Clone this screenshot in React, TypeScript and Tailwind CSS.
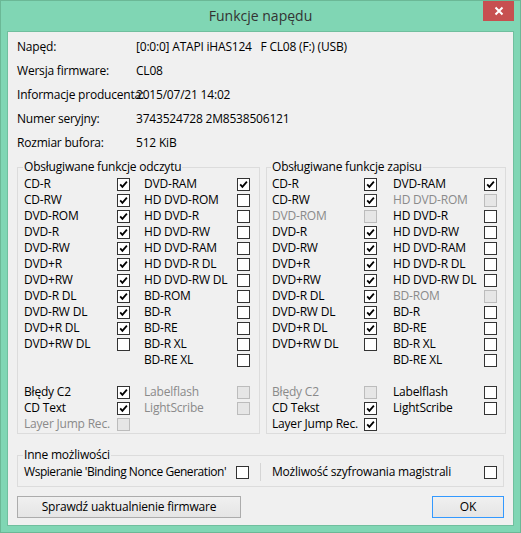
import React from 'react'

type Item = { label: string; state: 'on' | 'off' | 'dis' } | null

const readCol1: Item[] = [
  { label: 'CD-R', state: 'on' },
  { label: 'CD-RW', state: 'on' },
  { label: 'DVD-ROM', state: 'on' },
  { label: 'DVD-R', state: 'on' },
  { label: 'DVD-RW', state: 'on' },
  { label: 'DVD+R', state: 'on' },
  { label: 'DVD+RW', state: 'on' },
  { label: 'DVD-R DL', state: 'on' },
  { label: 'DVD-RW DL', state: 'on' },
  { label: 'DVD+R DL', state: 'on' },
  { label: 'DVD+RW DL', state: 'off' },
  null,
  null,
  { label: 'Błędy C2', state: 'on' },
  { label: 'CD Text', state: 'on' },
  { label: 'Layer Jump Rec.', state: 'dis' },
]

const readCol2: Item[] = [
  { label: 'DVD-RAM', state: 'on' },
  { label: 'HD DVD-ROM', state: 'off' },
  { label: 'HD DVD-R', state: 'off' },
  { label: 'HD DVD-RW', state: 'off' },
  { label: 'HD DVD-RAM', state: 'off' },
  { label: 'HD DVD-R DL', state: 'off' },
  { label: 'HD DVD-RW DL', state: 'off' },
  { label: 'BD-ROM', state: 'off' },
  { label: 'BD-R', state: 'off' },
  { label: 'BD-RE', state: 'off' },
  { label: 'BD-R XL', state: 'off' },
  { label: 'BD-RE XL', state: 'off' },
  null,
  { label: 'Labelflash', state: 'dis' },
  { label: 'LightScribe', state: 'dis' },
]

const writeCol1: Item[] = [
  { label: 'CD-R', state: 'on' },
  { label: 'CD-RW', state: 'on' },
  { label: 'DVD-ROM', state: 'dis' },
  { label: 'DVD-R', state: 'on' },
  { label: 'DVD-RW', state: 'on' },
  { label: 'DVD+R', state: 'on' },
  { label: 'DVD+RW', state: 'on' },
  { label: 'DVD-R DL', state: 'on' },
  { label: 'DVD-RW DL', state: 'on' },
  { label: 'DVD+R DL', state: 'on' },
  { label: 'DVD+RW DL', state: 'off' },
  null,
  null,
  { label: 'Błędy C2', state: 'dis' },
  { label: 'CD Tekst', state: 'on' },
  { label: 'Layer Jump Rec.', state: 'on' },
]

const writeCol2: Item[] = [
  { label: 'DVD-RAM', state: 'on' },
  { label: 'HD DVD-ROM', state: 'dis' },
  { label: 'HD DVD-R', state: 'off' },
  { label: 'HD DVD-RW', state: 'off' },
  { label: 'HD DVD-RAM', state: 'off' },
  { label: 'HD DVD-R DL', state: 'off' },
  { label: 'HD DVD-RW DL', state: 'off' },
  { label: 'BD-ROM', state: 'dis' },
  { label: 'BD-R', state: 'off' },
  { label: 'BD-RE', state: 'off' },
  { label: 'BD-R XL', state: 'off' },
  { label: 'BD-RE XL', state: 'off' },
  null,
  { label: 'Labelflash', state: 'off' },
  { label: 'LightScribe', state: 'off' },
]

const info = [
  ['Napęd:', '[0:0:0] ATAPI iHAS124   F CL08 (F:) (USB)'],
  ['Wersja firmware:', 'CL08'],
  ['Informacje producenta:', '2015/07/21 14:02'],
  ['Numer seryjny:', '3743524728 2M8538506121'],
  ['Rozmiar bufora:', '512 KiB'],
]

function Box({ checked, disabled }: { checked?: boolean; disabled?: boolean }) {
  return (
    <span
      className={
        disabled
          ? 'flex h-[13px] w-[13px] shrink-0 border border-[#bcbcbc] bg-[#e6e6e6]'
          : 'flex h-[13px] w-[13px] shrink-0 border border-[#333333] bg-white'
      }
    >
      {checked && (
        <svg width="11" height="11" viewBox="0 0 11 11">
          <path d="M2.2 5.4 L4.4 7.8 L8.9 2.6" fill="none" stroke="#000" strokeWidth="1.8" />
        </svg>
      )}
    </span>
  )
}

function Column({ items, labelW }: { items: Item[]; labelW: string }) {
  return (
    <div className="flex flex-col">
      {items.map((it, i) =>
        it ? (
          <div key={i} className="flex h-[16px] items-center">
            <span className={`${labelW} whitespace-nowrap ${it.state === 'dis' ? 'text-[#8a8a8a]' : 'text-black'}`}>
              {it.label}
            </span>
            <Box checked={it.state === 'on'} disabled={it.state === 'dis'} />
          </div>
        ) : (
          <div key={i} className="h-[16px]" />
        ),
      )}
    </div>
  )
}

export default function App() {
  return (
    <div className="flex h-[533px] w-[521px] flex-col border border-[#6bb896] bg-[#80d6b4] font-['Open_Sans',sans-serif] text-[12px] leading-[16px] tracking-[-0.2px] text-black">
      {/* title bar */}
      <div className="relative flex h-[30px] shrink-0 items-center justify-center">
        <span className="text-[14px] tracking-normal text-[#333333]">Funkcje napędu</span>
        <div className="absolute right-[6px] top-0 flex h-[20px] w-[31px] items-center justify-center bg-[#c75050]">
          <svg width="10" height="10" viewBox="0 0 10 10">
            <path d="M1.5 1.5 L8.5 8.5 M8.5 1.5 L1.5 8.5" stroke="#fff" strokeWidth="2" />
          </svg>
        </div>
      </div>

      {/* client area */}
      <div className="mx-[6px] mb-[6px] flex flex-1 flex-col border border-[#70bf9e] bg-[#f0f0f0] pl-[9px] pt-[3px]">
        {info.map(([k, v]) => (
          <div key={k} className="flex h-[24px] items-center whitespace-nowrap">
            <span className="w-[119px] shrink-0 overflow-visible">{k}</span>
            <span className="whitespace-pre">{v}</span>
          </div>
        ))}

        <div className="mt-[4px] flex gap-[6px]">
          <fieldset className="w-[243px] border border-[#dcdcdc] pb-[1px] pl-[6px] pr-[9px]">
            <legend className="-ml-[1px] px-[1px]">Obsługiwane funkcje odczytu</legend>
            <div className="flex gap-[14px] pt-[1px]">
              <Column items={readCol1} labelW="w-[93px]" />
              <Column items={readCol2} labelW="w-[93px]" />
            </div>
          </fieldset>
          <fieldset className="w-[240px] border border-[#dcdcdc] pb-[1px] pl-[5px] pr-[8px]">
            <legend className="-ml-[1px] px-[1px]">Obsługiwane funkcje zapisu</legend>
            <div className="flex gap-[16px] pt-[1px]">
              <Column items={writeCol1} labelW="w-[92px]" />
              <Column items={writeCol2} labelW="w-[91px]" />
            </div>
          </fieldset>
        </div>

        <fieldset className="mt-[13px] w-[487px] border border-[#dcdcdc] pb-[5px] pl-[6px]">
          <legend className="-ml-[1px] px-[1px]">Inne możliwości</legend>
          <div className="flex h-[18px] items-center">
            <span className="w-[212px] whitespace-nowrap tracking-[-0.45px]">Wspieranie 'Binding Nonce Generation'</span>
            <Box />
            <span className="mx-[11px] h-[18px] w-px bg-[#d5d5d5]" />
            <span className="w-[212px] whitespace-nowrap">Możliwość szyfrowania magistrali</span>
            <Box />
          </div>
        </fieldset>

        <div className="mt-[9px] flex w-[487px] justify-between">
          <button className="h-[22px] w-[224px] border border-[#acacac] bg-gradient-to-b from-[#f0f0f0] to-[#e5e5e5]">
            Sprawdź uaktualnienie firmware
          </button>
          <button className="h-[22px] w-[72px] border border-[#3399ff] bg-gradient-to-b from-[#f0f0f0] to-[#e5e5e5]">
            OK
          </button>
        </div>
      </div>
    </div>
  )
}
